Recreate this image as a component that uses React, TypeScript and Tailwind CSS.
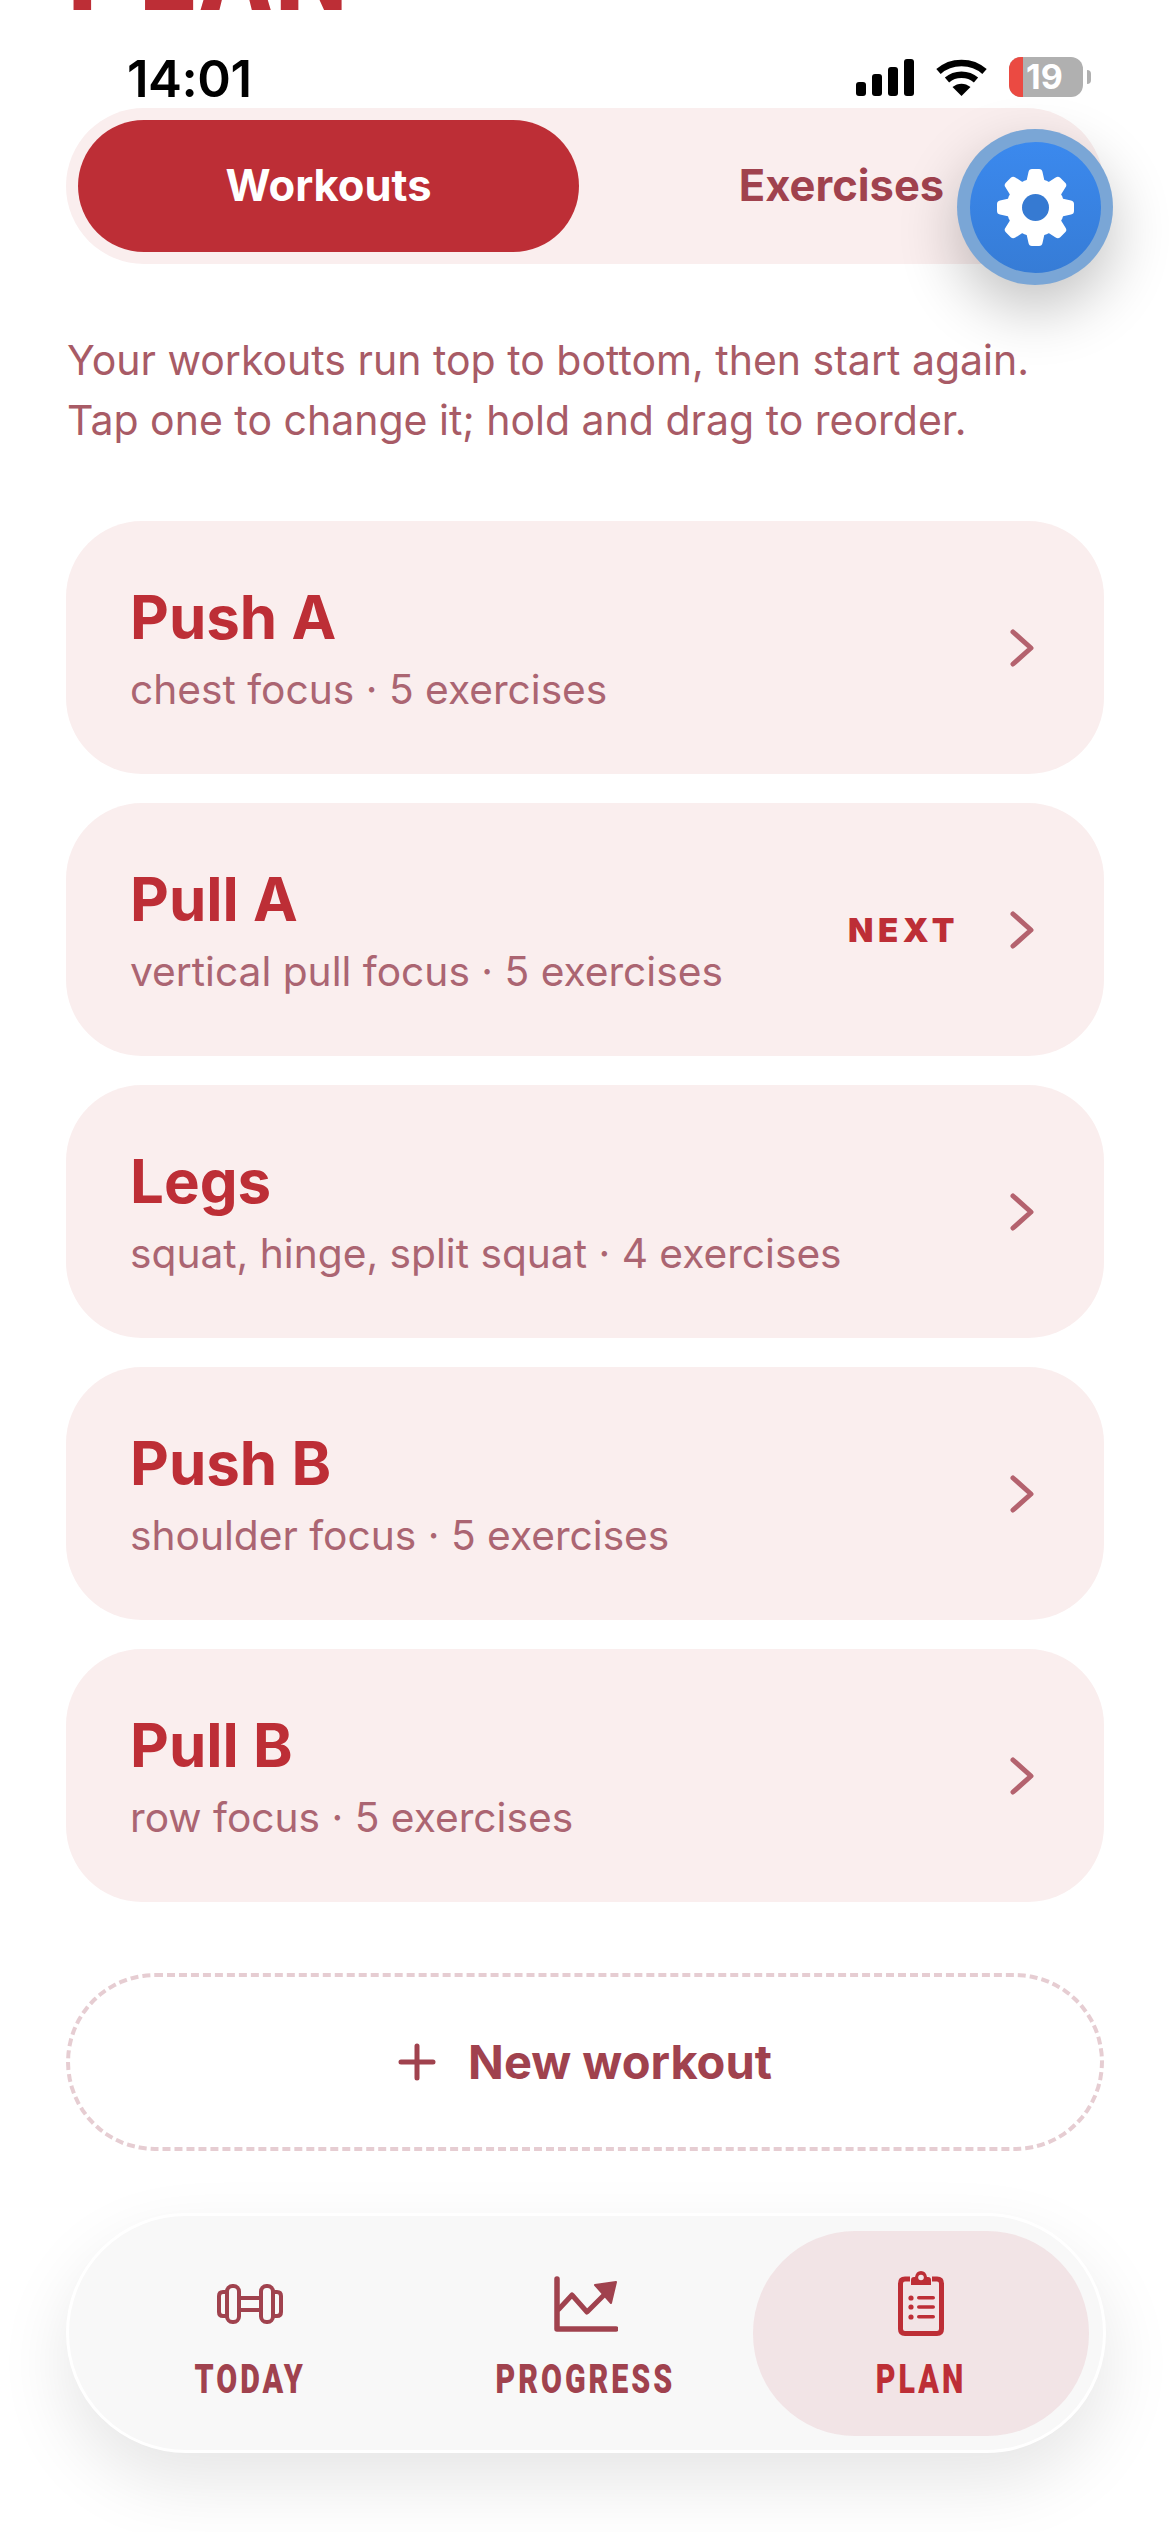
const inter = "font-['Inter','Liberation_Sans',sans-serif]";

const workouts = [
  { name: "Push A", sub: "chest focus · 5 exercises" },
  { name: "Pull A", sub: "vertical pull focus · 5 exercises", next: true },
  { name: "Legs", sub: "squat, hinge, split squat · 4 exercises" },
  { name: "Push B", sub: "shoulder focus · 5 exercises" },
  { name: "Pull B", sub: "row focus · 5 exercises" },
];

function Signal() {
  return (
    <svg width="58" height="37" viewBox="0 0 58 37" fill="#000">
      <rect x="0" y="23" width="10" height="14" rx="3" />
      <rect x="16" y="15" width="10" height="22" rx="3" />
      <rect x="32" y="8" width="10" height="29" rx="3" />
      <rect x="48" y="0" width="10" height="37" rx="3" />
    </svg>
  );
}

function Wifi() {
  return (
    <svg width="51" height="37" viewBox="0 0 51 37" fill="none">
      <path d="M2.5 12.5C15 1 36 1 48.5 12.5" stroke="#000" strokeWidth="6.5" strokeLinecap="butt" />
      <path d="M11 21C19 14 32 14 40 21" stroke="#000" strokeWidth="6.5" strokeLinecap="butt" />
      <path d="M16.5 28C22 23.5 29 23.5 34.5 28L25.5 37Z" fill="#000" />
    </svg>
  );
}

function Gear() {
  const angles = [0, 45, 90, 135, 180, 225, 270, 315];
  return (
    <svg width="77" height="77" viewBox="0 0 77 77" fill="#fff">
      {angles.map((a) => (
        <path key={a} transform={`rotate(${a} 38.5 38.5)`} d="M29.5 12L31.5 3Q32 0 35 0H42Q45 0 45.5 3L47.5 12Z" />
      ))}
      <circle cx="38.5" cy="38.5" r="29" />
      <circle cx="38.5" cy="38.5" r="13.5" fill="#367ad2" />
    </svg>
  );
}

function Dumbbell() {
  return (
    <svg width="66" height="40" viewBox="0 0 66 40" fill="none" stroke="#a0424e" strokeWidth="4" strokeLinejoin="round">
      <path d="M10 8H6Q2 8 2 12V28Q2 32 6 32H10" />
      <rect x="10" y="2" width="12" height="36" rx="5.5" />
      <path d="M22 14H44M22 26H44" />
      <rect x="44" y="2" width="12" height="36" rx="5.5" />
      <path d="M56 8H60Q64 8 64 12V28Q64 32 60 32H56" />
    </svg>
  );
}

function Chart() {
  return (
    <svg width="64" height="56" viewBox="0 0 64 56" fill="none" stroke="#a0424e" strokeLinecap="round" strokeLinejoin="round">
      <path d="M3 3V53H62" strokeWidth="5.5" />
      <path d="M5 33L18 19L33 36L50 19" strokeWidth="5" />
      <path d="M41 9L62 6L57 27Z" fill="#a0424e" strokeWidth="2" />
    </svg>
  );
}

function Clipboard() {
  return (
    <svg width="46" height="65" viewBox="0 0 46 65" fill="none">
      <path d="M12 8H7Q2.5 8 2.5 12.5V58Q2.5 62.5 7 62.5H39Q43.5 62.5 43.5 58V12.5Q43.5 8 39 8H34" stroke="#bd2e36" strokeWidth="5" />
      <path d="M13 14V9Q13 6 16 6H17Q18 0 23 0Q28 0 29 6H30Q33 6 33 9V14Z" fill="#bd2e36" />
      <circle cx="23" cy="6.5" r="2.8" fill="#f2e4e6" />
      <g fill="#bd2e36">
        <circle cx="13" cy="27" r="2.6" />
        <circle cx="13" cy="36" r="2.6" />
        <circle cx="13" cy="46" r="2.6" />
        <rect x="19" y="25" width="18" height="3.6" rx="1.8" />
        <rect x="19" y="34.2" width="18" height="3.6" rx="1.8" />
        <rect x="19" y="44" width="18" height="3.6" rx="1.8" />
      </g>
    </svg>
  );
}

function Chevron() {
  return (
    <svg width="24" height="38" viewBox="0 0 24 38" fill="none" stroke="#b4626e" strokeWidth="5" strokeLinecap="round" strokeLinejoin="round">
      <path d="M3 3L21 19L3 35" />
    </svg>
  );
}

function NavItem({ label, active, children }: { label: string; active?: boolean; children: React.ReactNode }) {
  return (
    <div className={`flex h-[205px] w-[337px] flex-col items-center rounded-[102px] pt-[33px] ${active ? "bg-[#f2e4e6]" : ""}`}>
      <div className="flex h-[80px] items-center justify-center">{children}</div>
      <div
        className={`mt-[12px] scale-x-[0.74] font-['Roboto',sans-serif] text-[41px] font-black leading-[46px] tracking-[4px] ${active ? "text-[#bd2e36]" : "text-[#a0424e]"}`}
      >
        {label}
      </div>
    </div>
  );
}

export default function App() {
  return (
    <div className={`relative flex h-[2532px] w-[1170px] flex-col overflow-hidden bg-white ${inter}`}>
      <div className="h-[13px] overflow-hidden pl-[68px]">
        <div className="-mt-[90px] origin-left scale-x-[0.8] font-['Roboto',sans-serif] text-[128px] font-black leading-[112px] tracking-[6px] text-[#bd2e36]">
          PLAN
        </div>
      </div>

      <div className="flex h-[95px] items-start justify-between pl-[127px] pr-[79px] pt-[43px]">
        <div className="text-[51px] font-semibold leading-[46px] tracking-[-0.5px] text-black">14:01</div>
        <div className="flex items-center gap-[22px] pt-[1px]">
          <Signal />
          <Wifi />
          <div className="flex items-center gap-[4px]">
            <div className="flex h-[40px] w-[74px] items-center rounded-[12px] bg-[#b0b0b0]">
              <div className="h-full w-[14px] rounded-l-[12px] bg-[#eb4a42]" />
              <div className="pl-[3px] text-[34px] font-bold leading-[40px] text-white">19</div>
            </div>
            <div className="h-[14px] w-[4px] rounded-r-full bg-[#b0b0b0]" />
          </div>
        </div>
      </div>

      <div className="mx-[66px] flex h-[156px] w-[1038px] gap-[12px] rounded-[78px] bg-[#faeeee] p-[12px]">
        <div className="flex h-[132px] w-[501px] items-center justify-center rounded-[66px] bg-[#bd2e36] pb-[1px] text-[43.5px] font-bold text-white">
          Workouts
        </div>
        <div className="flex h-[132px] w-[501px] items-center justify-center pb-[1px] text-[43.5px] font-bold text-[#a0424e]">
          Exercises
        </div>
      </div>

      <div className="absolute left-[957px] top-[129px] flex h-[156px] w-[156px] items-center justify-center rounded-full bg-[#7aa6d6] shadow-[0_24px_60px_rgba(0,0,0,0.24)]">
        <div className="flex h-[131px] w-[131px] items-center justify-center rounded-full bg-gradient-to-b from-[#3b89ee] to-[#367cd6]">
          <Gear />
        </div>
      </div>

      <p className="mx-[67px] mt-[66px] text-[41px] leading-[60px] text-[#a85b66]">
        Your workouts run top to bottom, then start again.
        <br />
        Tap one to change it; hold and drag to reorder.
      </p>

      <div className="mx-[66px] mt-[71px] flex flex-col gap-[29px]">
        {workouts.map((w) => (
          <div key={w.name} className="flex h-[253px] items-center justify-between rounded-[76px] bg-[#faeeee] pl-[64px] pr-[70px]">
            <div>
              <div className="text-[60px] font-bold leading-[72px] text-[#bd2e36]">{w.name}</div>
              <div className="mt-[13px] text-[40.7px] leading-[48px] text-[#ab6572]">{w.sub}</div>
            </div>
            <div className="flex items-center gap-[51px]">
              {w.next && <div className="text-[33px] font-black leading-[40px] tracking-[4.5px] text-[#bd2e36]">NEXT</div>}
              <Chevron />
            </div>
          </div>
        ))}
      </div>

      <div className="mx-[66px] mt-[71px] flex h-[178px] items-center justify-center gap-[32px] rounded-[89px] border-[4px] border-dashed border-[#e6cdd2]">
        <svg width="38" height="38" viewBox="0 0 38 38" fill="none" stroke="#a0424e" strokeWidth="5" strokeLinecap="round">
          <path d="M19 3V35M3 19H35" />
        </svg>
        <div className="text-[47px] font-bold leading-[56px] text-[#a0424e]">New workout</div>
      </div>

      <div className="mx-[66px] mt-[62px] flex h-[240px] w-[1040px] items-center justify-between rounded-[120px] border-[3px] border-white bg-[#f8f8f8] pl-[13px] pr-[14px] shadow-[0_30px_70px_rgba(0,0,0,0.1)]">
        <NavItem label="TODAY">
          <Dumbbell />
        </NavItem>
        <NavItem label="PROGRESS">
          <Chart />
        </NavItem>
        <NavItem label="PLAN" active>
          <Clipboard />
        </NavItem>
      </div>
    </div>
  );
}
